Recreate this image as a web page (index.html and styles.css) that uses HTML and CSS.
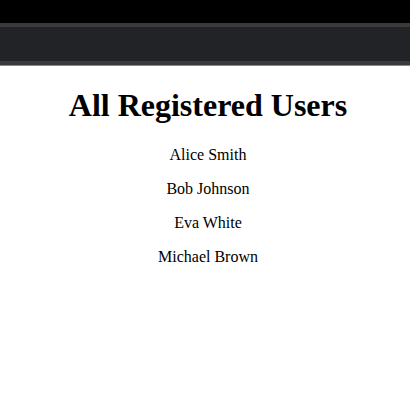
FILE: index.html
```html
<!DOCTYPE html>
<html>
<head>
<meta charset="utf-8">
<link rel="stylesheet" href="styles.css">
</head>
<body>
<div class="topbar"></div>
<nav class="navbar"></nav>
<main class="content">
  <h1 class="title">All Registered Users</h1>
  <p class="user">Alice Smith</p>
  <p class="user">Bob Johnson</p>
  <p class="user">Eva White</p>
  <p class="user">Michael Brown</p>
</main>
</body>
</html>
```
FILE: styles.css
```css
body {
  margin: 0;
  font-family: "Liberation Serif", "Times New Roman", serif;
  background: #ffffff;
  color: #000000;
}
.topbar {
  height: 23px;
  background: #000000;
}
.navbar {
  height: 34px;
  background: #222327;
  border-top: 4px solid #3a3a3a;
  border-bottom: 4px solid #3a3a3a;
  box-shadow: 0 1px 0 #8a8a8a;
}
.content {
  text-align: center;
  padding: 2px 0 0 6px;
}
.title {
  font-size: 32px;
  font-weight: bold;
  margin: 20px 0 22px;
}
.user {
  font-size: 16px;
  margin: 16px 0;
}
```
